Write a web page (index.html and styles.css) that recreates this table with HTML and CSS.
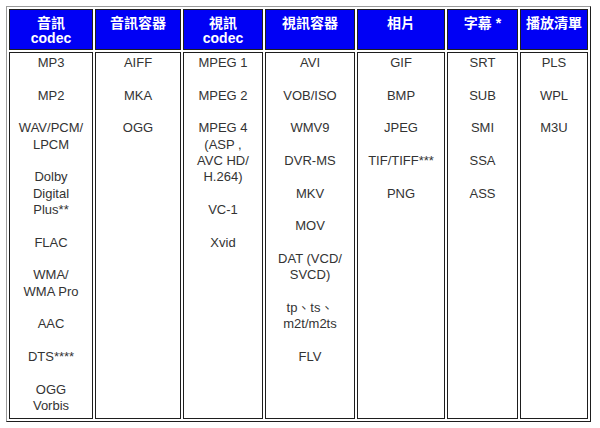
FILE: index.html
```html
<!DOCTYPE html>
<html lang="zh-Hant">
<head>
<meta charset="utf-8">
<title>支援格式</title>
<link rel="stylesheet" href="styles.css">
</head>
<body>
<table class="formats">
  <colgroup>
    <col class="c1"><col class="c2"><col class="c3"><col class="c4"><col class="c5"><col class="c6"><col class="c7">
  </colgroup>
  <tr class="head">
    <th>音訊<br>codec</th>
    <th>音訊容器</th>
    <th>視訊<br>codec</th>
    <th>視訊容器</th>
    <th>相片</th>
    <th>字幕 *</th>
    <th>播放清單</th>
  </tr>
  <tr class="body">
    <td>
      <p>MP3</p>
      <p>MP2</p>
      <p>WAV/PCM/<br>LPCM</p>
      <p>Dolby<br>Digital<br>Plus**</p>
      <p>FLAC</p>
      <p>WMA/<br>WMA Pro</p>
      <p>AAC</p>
      <p>DTS****</p>
      <p>OGG<br>Vorbis</p>
    </td>
    <td>
      <p>AIFF</p>
      <p>MKA</p>
      <p>OGG</p>
    </td>
    <td>
      <p>MPEG 1</p>
      <p>MPEG 2</p>
      <p>MPEG 4<br>(ASP ,<br>AVC HD/<br>H.264)</p>
      <p>VC-1</p>
      <p>Xvid</p>
    </td>
    <td>
      <p>AVI</p>
      <p>VOB/ISO</p>
      <p>WMV9</p>
      <p>DVR-MS</p>
      <p>MKV</p>
      <p>MOV</p>
      <p>DAT (VCD/<br>SVCD)</p>
      <p>tp、ts、<br>m2t/m2ts</p>
      <p>FLV</p>
    </td>
    <td>
      <p>GIF</p>
      <p>BMP</p>
      <p>JPEG</p>
      <p>TIF/TIFF***</p>
      <p>PNG</p>
    </td>
    <td>
      <p>SRT</p>
      <p>SUB</p>
      <p>SMI</p>
      <p>SSA</p>
      <p>ASS</p>
    </td>
    <td>
      <p>PLS</p>
      <p>WPL</p>
      <p>M3U</p>
    </td>
  </tr>
</table>
</body>
</html>
```

FILE: styles.css
```css
html, body {
  margin: 0;
  background: #ffffff;
}

body {
  padding: 6px 0 0 6px;
  font-family: "Liberation Sans", Arial, "Noto Sans CJK TC", sans-serif;
}

.formats {
  border-collapse: separate;
  border-spacing: 2px;
  border: 1px solid;
  border-color: #9a9a9a #1e1e1e #1e1e1e #9a9a9a;
  table-layout: fixed;
  width: 585px;
}

.c1 { width: 84px; }
.c2 { width: 86px; }
.c3 { width: 80px; }
.c4 { width: 90px; }
.c5 { width: 88px; }
.c6 { width: 71px; }
.c7 { width: 68px; }

.formats th,
.formats td {
  border: 1px solid #1e1e1e;
  padding: 0;
  vertical-align: top;
  text-align: center;
}

.head {
  height: 41px;
}

.formats th {
  background: #0000f5;
  color: #ffffff;
  font-family: "Liberation Sans", Arial, "Noto Sans CJK TC", sans-serif;
  font-weight: bold;
  font-size: 14px;
  line-height: 15px;
  padding-top: 6px;
}

.body {
  height: 367px;
}

.formats td {
  color: #333333;
  font-size: 13px;
  line-height: 16.33px;
  padding-top: 2px;
}

.formats td p {
  margin: 0 0 16.33px;
}

.formats td p:last-child {
  margin-bottom: 0;
}
```
